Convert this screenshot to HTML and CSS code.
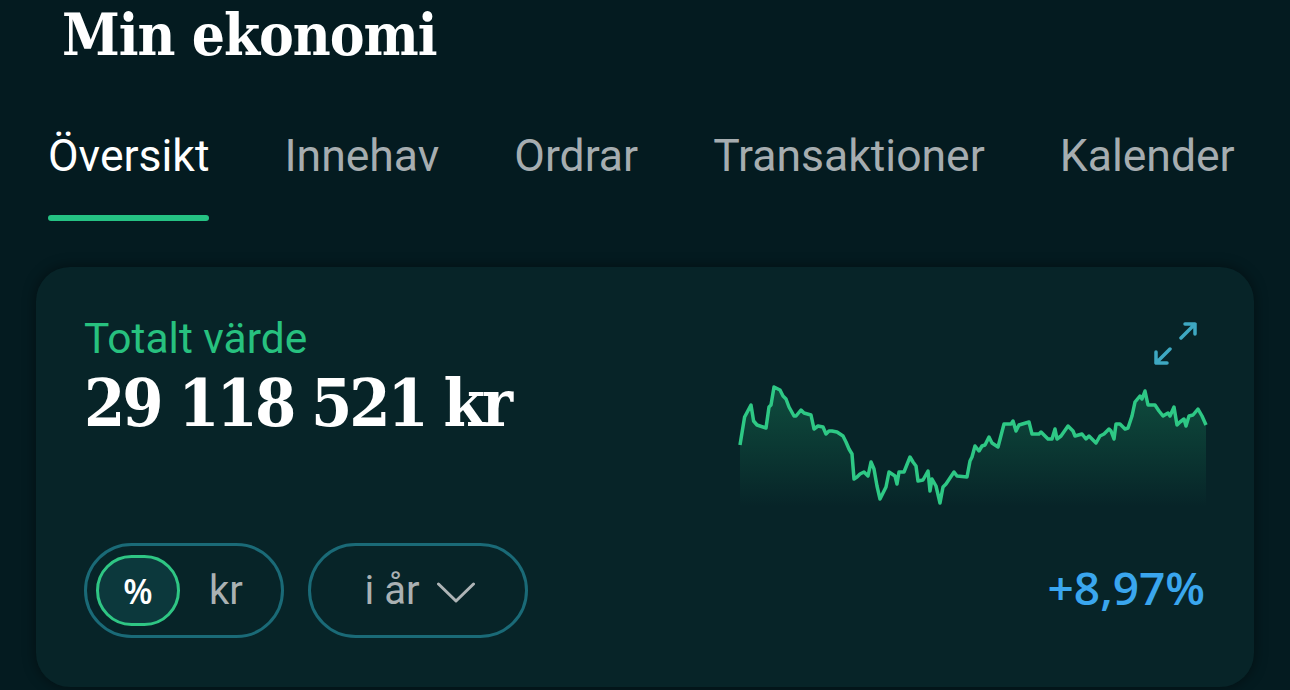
FILE: index.html
```html
<!DOCTYPE html>
<html lang="sv">
<head>
  <meta charset="UTF-8">
  <title>Min ekonomi</title>
  <link rel="stylesheet" href="styles.css">
</head>
<body>
  <h1>Min ekonomi</h1>

  <nav class="tabs">
    <span class="tab active">Översikt</span>
    <span class="tab">Innehav</span>
    <span class="tab">Ordrar</span>
    <span class="tab">Transaktioner</span>
    <span class="tab">Kalender</span>
  </nav>

  <section class="card">
    <div class="summary">
      <p class="label">Totalt värde</p>
      <p class="value">29 118 521 kr</p>

      <div class="controls">
        <div class="toggle">
          <span class="opt selected">%</span>
          <span class="opt">kr</span>
        </div>
        <button class="period">
          i år
          <svg class="chevron" width="38" height="22" viewBox="0 0 38 22">
            <polyline points="1.5,2 19,19 36.5,2" fill="none" stroke="#aeb4b6" stroke-width="3" stroke-linecap="round" stroke-linejoin="round"/>
          </svg>
        </button>
      </div>
    </div>

    <div class="trend">
      <svg class="expand" width="44" height="44" viewBox="0 0 44 44">
        <g fill="none" stroke="#3ea8c2" stroke-width="3.5" stroke-linecap="round" stroke-linejoin="round">
          <path d="M27 16 L41 2 M31 2 H41 V12"/>
          <path d="M16 27 L2 41 M2 30 V41 H13"/>
        </g>
      </svg>

      <svg class="chart" width="470" height="125" viewBox="0 0 470 125">
        <defs>
          <linearGradient id="fade" x1="0" y1="0" x2="0" y2="1">
            <stop offset="0" stop-color="#1fa36c" stop-opacity="0.32"/>
            <stop offset="1" stop-color="#1fa36c" stop-opacity="0"/>
          </linearGradient>
        </defs>
        <path id="area" fill="url(#fade)" d=""/>
        <polyline id="line" fill="none" stroke="#2ec885" stroke-width="3.5" stroke-linejoin="round" points=""/>
      </svg>

      <p class="change">+8,97%</p>
    </div>
  </section>

  <script src="chart.js"></script>
</body>
</html>
```

FILE: styles.css
```css
body {
  margin: 0;
  width: 1290px;
  height: 690px;
  overflow: hidden;
  background: #041b20;
  color: #ffffff;
  font-family: Roboto, "Noto Sans", sans-serif;
}

h1 {
  margin: 0;
  padding: 0 0 0 62px;
  font-family: "DejaVu Serif Condensed", "DejaVu Serif", serif;
  font-weight: bold;
  font-size: 58px;
  line-height: 70px;
  letter-spacing: -1px;
}

.tabs {
  display: flex;
  gap: 75px;
  padding-left: 48px;
  margin-top: 60px;
}
.tab {
  font-size: 44.5px;
  line-height: 52px;
  color: #a6adb0;
}
.tab.active {
  color: #ffffff;
}
.tab.active::after {
  content: "";
  display: block;
  height: 6px;
  margin-top: 33px;
  border-radius: 3px;
  background: #25c283;
}

.card {
  display: flex;
  justify-content: space-between;
  margin: 46px 36px 0;
  height: 420px;
  box-sizing: border-box;
  padding: 48px 46px 49px 48px;
  background: #072428;
  border-radius: 34px;
  box-shadow: 0 0 14px rgba(0, 0, 0, 0.45);
}

.summary {
  display: flex;
  flex-direction: column;
}
.label {
  margin: 0;
  font-size: 42.5px;
  line-height: 48px;
  color: #27c17f;
}
.value {
  margin: 0;
  font-family: "DejaVu Serif Condensed", "DejaVu Serif", serif;
  font-weight: bold;
  font-size: 66px;
  line-height: 80px;
  letter-spacing: -3px;
}

.controls {
  display: flex;
  gap: 24px;
  margin-top: auto;
}
.toggle {
  display: flex;
  align-items: center;
  width: 200px;
  height: 95px;
  box-sizing: border-box;
  padding: 0 9px;
  border: 3px solid #1a6a77;
  border-radius: 48px;
}
.opt {
  font-size: 40px;
  color: #aab1b3;
}
.opt.selected {
  width: 84px;
  height: 71px;
  box-sizing: border-box;
  display: flex;
  align-items: center;
  justify-content: center;
  border: 3px solid #2fc684;
  border-radius: 36px;
  background: #0c383c;
  color: #ffffff;
  font-family: "Open Sans", sans-serif;
  font-weight: 600;
  font-size: 34px;
}
.opt.selected + .opt {
  margin-left: 29px;
}
.period {
  display: flex;
  align-items: center;
  justify-content: center;
  gap: 18px;
  width: 220px;
  height: 95px;
  padding: 0 0 0 4px;
  background: none;
  border: 3px solid #1a6a77;
  border-radius: 48px;
  color: #aab1b3;
  font-family: Roboto, sans-serif;
  font-size: 40px;
}
.chevron {
  margin-top: 4px;
}

.trend {
  display: flex;
  flex-direction: column;
  align-items: flex-end;
  width: 470px;
}
.expand {
  margin: 7px 10px 0 0;
}
.chart {
  margin-top: 16px;
}
.change {
  margin: auto 3px 0 0;
  font-family: "Open Sans", sans-serif;
  font-weight: 600;
  font-size: 46px;
  line-height: 60px;
  color: #3aa6ee;
  padding-bottom: 21px;
}
```

FILE: chart.js
```js
// sampled points of the year curve (x, y inside the chart box)
const pts = [
  [2,63],[6.6,35],[13,23],[15.6,39],[19,43],[28,46],[31,25],[33,23],[36,5],[42,8],
  [45,14],[48,17],[51,25],[56,34],[58,34],[63,28],[66,31],[73,33],[76,47],[80,44],
  [85,45],[88,52],[91,49],[94,49],[99,50],[105,54],[108,60],[111,67],[114,72],[116,97],
  [119,95],[122,92],[126,90],[130,94],[133,80],[136,87],[139,104],[142,117],[146,109],[148,105],
  [151,90],[157,94],[159,102],[161,90],[166,90],[172,75],[175,80],[178,84],[180,99],[185,98],
  [190,89],[192,109],[194,97],[198,104],[202,121],[205,105],[208,102],[216,90],[219,94],[229,95],
  [232,79],[234,75],[237,64],[241,69],[244,64],[247,63],[251,55],[254,61],[260,65],[266,42],
  [273,42],[275,39],[278,49],[281,43],[291,40],[294,52],[301,52],[303,50],[307,54],[310,57],
  [314,57],[317,47],[319,57],[323,54],[330,44],[335,49],[337,54],[344,52],[348,57],[351,54],
  [358,61],[362,54],[366,52],[371,47],[373,49],[376,57],[378,42],[382,42],[387,47],[390,46],
  [394,34],[397,20],[402,14],[404,17],[407,9],[410,23],[417,23],[421,29],[425,34],[430,31],
  [432,34],[436,25],[439,43],[442,40],[446,37],[448,44],[451,34],[455,33],[460,27],[464,34],
  [468,43]
];

const line = pts.map(p => p[0] + ',' + p[1]).join(' ');
document.getElementById('line').setAttribute('points', line);
document.getElementById('area').setAttribute('d',
  'M' + pts[0][0] + ' 125 L' + line.replace(/ /g, ' L') + ' L' + pts[pts.length - 1][0] + ' 125 Z');
```
